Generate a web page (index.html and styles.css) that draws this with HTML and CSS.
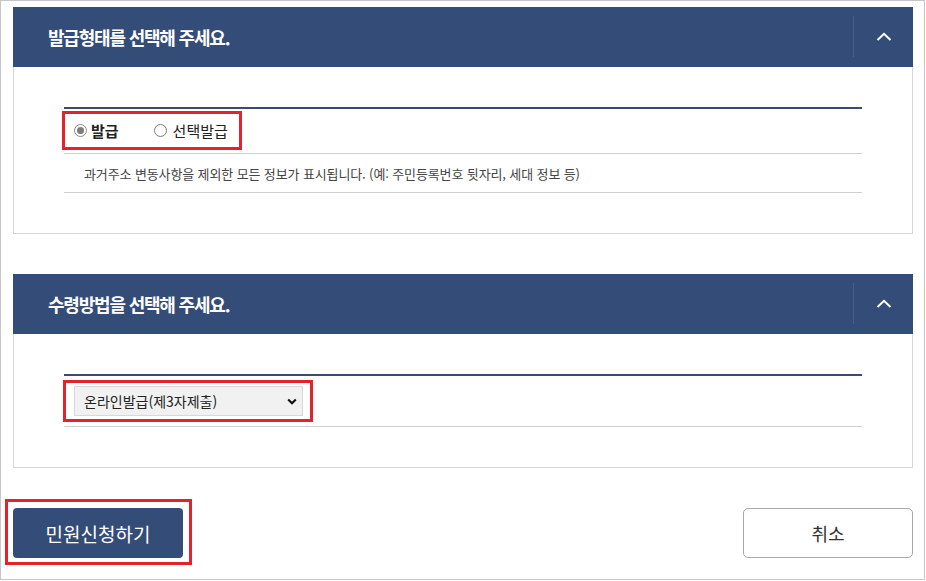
FILE: index.html
```html
<!DOCTYPE html>
<html lang="ko">
<head>
<meta charset="utf-8">
<title>민원신청</title>
<link rel="stylesheet" href="styles.css">
</head>
<body>
<div class="frame">
  <section class="panel">
    <div class="panel-head">
      <h2 class="panel-title">발급형태를 선택해 주세요.</h2>
      <button class="toggle" type="button" aria-label="접기">
        <svg width="16" height="9" viewBox="0 0 16 9"><polyline points="1.5,8 8,1.8 14.5,8" fill="none" stroke="#fff" stroke-width="2"/></svg>
      </button>
    </div>
    <div class="panel-body">
      <div class="table">
        <div class="row row-radio">
          <div class="mark mark-radio">
            <label class="radio-item checked"><span class="radio-dot"></span><span class="radio-label strong">발급</span></label>
            <label class="radio-item"><span class="radio-dot"></span><span class="radio-label">선택발급</span></label>
          </div>
        </div>
        <div class="row row-desc">과거주소 변동사항을 제외한 모든 정보가 표시됩니다. (예: 주민등록번호 뒷자리, 세대 정보 등)</div>
      </div>
    </div>
  </section>

  <section class="panel panel-second">
    <div class="panel-head">
      <h2 class="panel-title">수령방법을 선택해 주세요.</h2>
      <button class="toggle" type="button" aria-label="접기">
        <svg width="16" height="9" viewBox="0 0 16 9"><polyline points="1.5,8 8,1.8 14.5,8" fill="none" stroke="#fff" stroke-width="2"/></svg>
      </button>
    </div>
    <div class="panel-body">
      <div class="table">
        <div class="row row-select">
          <div class="mark mark-select">
            <div class="select-wrap">
              <select class="select">
                <option>온라인발급(제3자제출)</option>
              </select>
              <svg class="select-arrow" width="10" height="7" viewBox="0 0 10 7"><polyline points="1.2,1.5 5,5.2 8.8,1.5" fill="none" stroke="#111" stroke-width="2.2"/></svg>
            </div>
          </div>
        </div>
      </div>
    </div>
  </section>

  <div class="actions">
    <div class="mark mark-btn">
      <button class="btn btn-primary" type="button">민원신청하기</button>
    </div>
    <button class="btn btn-cancel" type="button">취소</button>
  </div>
</div>
</body>
</html>
```
FILE: styles.css
```css
* { box-sizing: border-box; }
html, body { margin: 0; padding: 0; background: #fff; }
body {
  font-family: "Noto Sans CJK KR", "Noto Sans", sans-serif;
  color: #222;
}
.frame {
  width: 925px;
  height: 580px;
  border: 1px solid #c6c6c6;
  padding: 6px 11px 0 12px;
  overflow: hidden;
}
.panel { width: 900px; }
.panel-second { margin-top: 40px; }
.panel-head {
  height: 60px;
  background: #344c78;
  display: flex;
  align-items: center;
}
.panel-title {
  margin: 0 0 0 35px;
  font-size: 18px;
  font-weight: 700;
  letter-spacing: -1.2px;
  color: #fff;
  line-height: 1;
}
.toggle {
  margin-left: auto;
  width: 60px;
  height: 41px;
  margin-top: -1px;
  border: 0;
  border-left: 1px solid #4a5f86;
  background: transparent;
  padding: 0;
  display: flex;
  align-items: center;
  justify-content: center;
}
.toggle svg { display: block; margin-left: 1px; }
.panel-body {
  border: 1px solid #d6d6d6;
  border-top: 0;
  padding: 40px 50px;
}
.table { border-top: 2px solid #3a4b6c; }
.row { border-bottom: 1px solid #d0d0d0; }
.row-radio { height: 45px; padding-top: 2px; }
.mark { border: 3px solid #e3232c; }
.mark-radio {
  display: inline-flex;
  align-items: center;
  height: 39px;
  margin-left: -2px;
  padding: 0 11px 0 9px;
}
.radio-item {
  display: inline-flex;
  align-items: center;
  font-size: 15px;
  line-height: 20px;
  color: #222;
}
.radio-item + .radio-item { margin-left: 35px; }
.radio-dot {
  width: 13px;
  height: 13px;
  border: 1px solid #7a7a7a;
  border-radius: 50%;
  background: #fff;
  display: inline-flex;
  align-items: center;
  justify-content: center;
  margin-right: 4px;
}
.radio-item + .radio-item .radio-dot { margin-right: 6px; }
.checked .radio-dot { border-color: #8a8a8a; }
.checked .radio-dot::after {
  content: "";
  width: 7px;
  height: 7px;
  border-radius: 50%;
  background: #7b7b7b;
}
.strong { font-weight: 700; }
.row-desc {
  height: 39px;
  display: flex;
  align-items: center;
  padding-left: 20px;
  font-size: 13px;
  color: #444;
  letter-spacing: -0.12px;
}
.row-select { height: 51px; padding-top: 4px; }
.mark-select {
  display: inline-block;
  margin-left: -1px;
  padding: 3px 7px 3px 8px;
}
.select-wrap { position: relative; width: 229px; height: 30px; }
.select {
  appearance: none;
  -webkit-appearance: none;
  width: 229px;
  height: 30px;
  border: 1px solid #d8d8d8;
  border-radius: 0;
  background: #f1f1f1;
  padding: 0 0 0 9px;
  font-family: "Noto Sans CJK KR", "Noto Sans", sans-serif;
  font-size: 14px;
  color: #222;
}
.select-arrow {
  position: absolute;
  right: 6px;
  top: 12px;
  pointer-events: none;
}
.actions {
  margin-top: 31px;
  display: flex;
  justify-content: space-between;
  align-items: flex-start;
  width: 900px;
}
.mark-btn {
  margin-left: -8px;
  padding: 6px 6px 4px 5px;
}
.btn {
  width: 170px;
  height: 50px;
  font-family: "Noto Sans CJK KR", "Noto Sans", sans-serif;
  font-size: 18px;
  display: block;
  padding: 0;
}
.btn-primary {
  background: #344c78;
  color: #fff;
  border: 0;
  border-radius: 4px;
  font-size: 19px;
}
.btn-cancel {
  margin-top: 9px;
  background: #fff;
  color: #333;
  border: 1px solid #a8a8a8;
  border-radius: 5px;
}
```
